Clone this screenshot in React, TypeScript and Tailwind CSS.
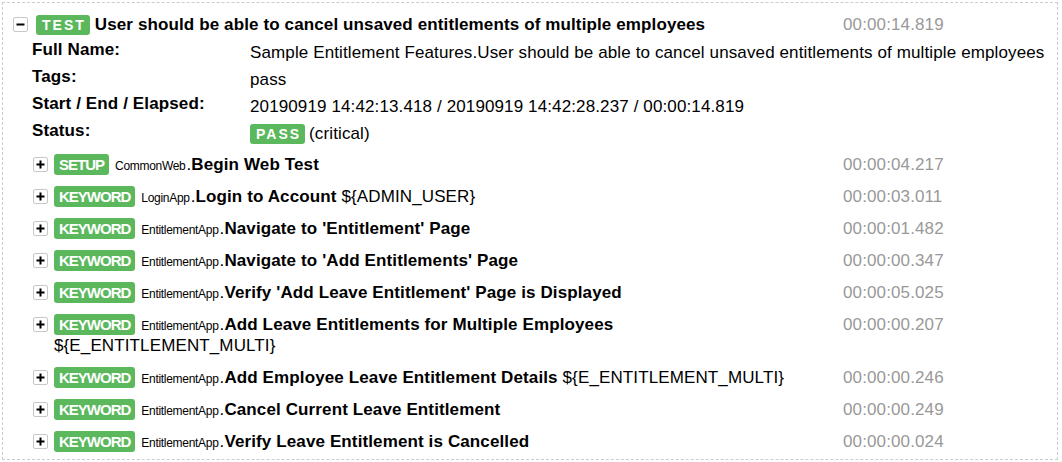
import React from 'react';

type Kw = {
  type: string;
  lib: string;
  name: string;
  args?: string;
  time: string;
};

const keywords: Kw[] = [
  { type: 'SETUP', lib: 'CommonWeb', name: 'Begin Web Test', time: '00:00:04.217' },
  { type: 'KEYWORD', lib: 'LoginApp', name: 'Login to Account', args: '${ADMIN_USER}', time: '00:00:03.011' },
  { type: 'KEYWORD', lib: 'EntitlementApp', name: "Navigate to 'Entitlement' Page", time: '00:00:01.482' },
  { type: 'KEYWORD', lib: 'EntitlementApp', name: "Navigate to 'Add Entitlements' Page", time: '00:00:00.347' },
  { type: 'KEYWORD', lib: 'EntitlementApp', name: "Verify 'Add Leave Entitlement' Page is Displayed", time: '00:00:05.025' },
  {
    type: 'KEYWORD',
    lib: 'EntitlementApp',
    name: 'Add Leave Entitlements for Multiple Employees',
    args: '${E_ENTITLEMENT_MULTI}',
    time: '00:00:00.207',
  },
  {
    type: 'KEYWORD',
    lib: 'EntitlementApp',
    name: 'Add Employee Leave Entitlement Details',
    args: '${E_ENTITLEMENT_MULTI}',
    time: '00:00:00.246',
  },
  { type: 'KEYWORD', lib: 'EntitlementApp', name: 'Cancel Current Leave Entitlement', time: '00:00:00.249' },
  { type: 'KEYWORD', lib: 'EntitlementApp', name: 'Verify Leave Entitlement is Cancelled', time: '00:00:00.024' },
];

function Toggle({ open }: { open?: boolean }) {
  return (
    <div className="w-[15px] h-[15px] shrink-0 border border-[#c8c8c8] rounded-[2px] bg-white flex items-center justify-center">
      <svg width="9" height="9" viewBox="0 0 9 9">
        <rect x="0.5" y="3.5" width="8" height="2" fill="#000" />
        {!open && <rect x="3.5" y="0.5" width="2" height="8" fill="#000" />}
      </svg>
    </div>
  );
}

// TEST / PASS style label
function Label({ children }: { children: React.ReactNode }) {
  return (
    <span className="inline-block align-top h-[20px] leading-[20px] pl-[6px] pr-[4px] rounded-[3px] bg-[#5cb85c] text-white font-bold text-[14px] tracking-[2px]">
      {children}
    </span>
  );
}

// SETUP / KEYWORD type badge
function TypeBadge({ children }: { children: React.ReactNode }) {
  return (
    <span className="inline-block align-top h-[21px] leading-[21px] px-[5px] rounded-[3px] bg-[#5cb85c] text-white font-bold text-[15px] tracking-[-1px]">
      {children}
    </span>
  );
}

const meta = [
  { label: 'Full Name:', value: 'Sample Entitlement Features.User should be able to cancel unsaved entitlements of multiple employees' },
  { label: 'Tags:', value: 'pass' },
  { label: 'Start / End / Elapsed:', value: '20190919 14:42:13.418 / 20190919 14:42:28.237 / 00:00:14.819' },
];

export default function App() {
  return (
    <div className="min-h-screen bg-white pt-[2px] pl-[2px] font-['Liberation_Sans',Arial,sans-serif] text-black text-[17px] tracking-[0.12px]">
      <div className="w-[1056px] h-[458px] border border-dashed border-[#cccccc] pt-[11px]">
        {/* test header */}
        <div className="flex items-center h-[21px] pl-[10px]">
          <Toggle open />
          <div className="flex-1 flex items-center ml-[8px]">
            <div className="flex-1 flex items-center leading-[21px]">
              <Label>TEST</Label>
              <span className="font-bold ml-[5px]">User should be able to cancel unsaved entitlements of multiple employees</span>
            </div>
            <div className="w-[214px] text-[#999]">00:00:14.819</div>
          </div>
        </div>

        {/* metadata */}
        <div className="mt-[4px] pl-[29px]">
          {meta.map((m) => (
            <div key={m.label} className="flex items-start h-[27px]">
              <div className="w-[218px] font-bold leading-[21px]">{m.label}</div>
              <div className="flex-1 leading-[21px] pt-[3px]">{m.value}</div>
            </div>
          ))}
          <div className="flex items-start h-[27px]">
            <div className="w-[218px] font-bold leading-[21px]">Status:</div>
            <div className="flex-1 leading-[21px] pt-[3px] flex items-center">
              <Label>PASS</Label>
              <span className="ml-[4px]">(critical)</span>
            </div>
          </div>
        </div>

        {/* keywords */}
        <div className="mt-[7px] pl-[30px] flex flex-col gap-[11px]">
          {keywords.map((k, i) => (
            <div key={i} className="flex items-start">
              <div className="h-[21px] flex items-center">
                <Toggle />
              </div>
              <div className="flex-1 flex ml-[6px]">
                <div className="flex-1 pr-[16px] leading-[21px]">
                  <TypeBadge>{k.type}</TypeBadge>
                  <span className="text-[12px] leading-[0px] tracking-[-0.3px] ml-[6px]">{k.lib}</span>
                  <span className="ml-[1px]">.</span>
                  <span className="font-bold">{k.name}</span>
                  {k.args && <span> {k.args}</span>}
                </div>
                <div className="w-[214px] shrink-0 leading-[21px] text-[#999]">{k.time}</div>
              </div>
            </div>
          ))}
        </div>
      </div>
    </div>
  );
}
